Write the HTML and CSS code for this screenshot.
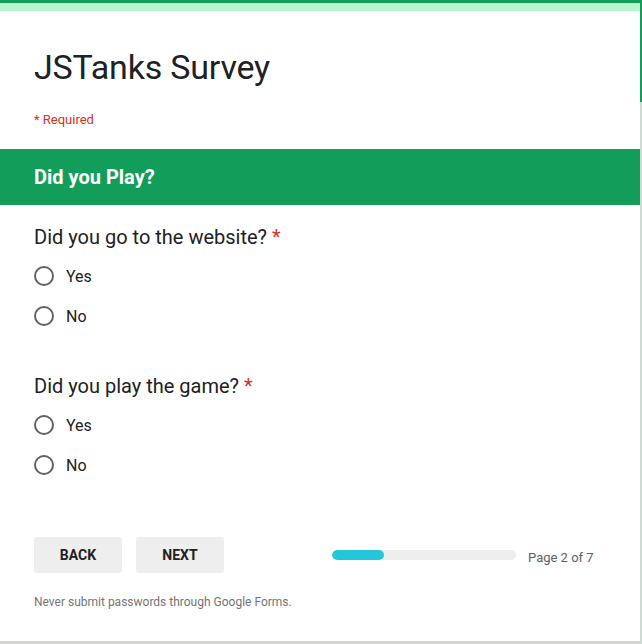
FILE: index.html
```html
<!DOCTYPE html>
<html lang="en">
<head>
<meta charset="utf-8">
<title>JSTanks Survey</title>
<link rel="stylesheet" href="styles.css">
</head>
<body>
<main class="card">
  <header class="form-head">
    <h1 class="form-title">JSTanks Survey</h1>
    <p class="required-note">* Required</p>
  </header>
  <h2 class="section-title">Did you Play?</h2>
  <section class="question">
    <div class="q-title">Did you go to the website? <span class="star">*</span></div>
    <label class="option"><span class="radio"></span><span class="opt-text">Yes</span></label>
    <label class="option"><span class="radio"></span><span class="opt-text">No</span></label>
  </section>
  <section class="question second">
    <div class="q-title">Did you play the game? <span class="star">*</span></div>
    <label class="option"><span class="radio"></span><span class="opt-text">Yes</span></label>
    <label class="option"><span class="radio"></span><span class="opt-text">No</span></label>
  </section>
  <div class="nav-row">
    <button class="btn">BACK</button>
    <button class="btn">NEXT</button>
    <div class="progress"><div class="progress-fill" style="width:28%"></div></div>
    <span class="page-count">Page 2 of 7</span>
  </div>
  <p class="footer-note">Never submit passwords through Google Forms.</p>
</main>
</body>
</html>
```
FILE: styles.css
```css
html, body {
  margin: 0;
  padding: 0;
}
body {
  width: 642px;
  height: 644px;
  overflow: hidden;
  background: linear-gradient(#129e5a 0, #129e5a 102px, #cfd9d4 102px);
  font-family: Roboto, "Noto Sans", sans-serif;
  color: #202124;
  padding-top: 3px;
  box-sizing: border-box;
}
.card {
  width: 640px;
  height: 638px;
  background: #fff;
  border-top: 8px solid #b7f6cb;
  box-sizing: border-box;
}
.form-head {
  padding: 36px 34px 0;
}
.form-title {
  margin: 0;
  font-size: 34px;
  line-height: 40px;
  font-weight: 400;
  letter-spacing: -0.2px;
  color: #202124;
}
.required-note {
  margin: 23px 0 0;
  font-size: 13px;
  line-height: 20px;
  color: #d93025;
}
.section-title {
  margin: 19px 0 0;
  height: 56px;
  line-height: 56px;
  background: #129e5a;
  color: #fff;
  font-size: 20px;
  font-weight: 700;
  padding-left: 34px;
}
.question {
  padding: 20px 34px 0;
}
.question.second {
  padding-top: 38px;
}
.q-title {
  font-size: 20px;
  line-height: 24px;
  margin-bottom: 7px;
}
.star {
  color: #d93025;
}
.option {
  display: flex;
  align-items: center;
  height: 40px;
  gap: 12px;
}
.radio {
  width: 20px;
  height: 20px;
  box-sizing: border-box;
  border: 2px solid #5f6368;
  border-radius: 50%;
}
.opt-text {
  font-size: 16px;
  color: #202124;
}
.nav-row {
  display: flex;
  align-items: center;
  padding: 52px 34px 0;
}
.btn {
  width: 88px;
  height: 36px;
  border: 0;
  border-radius: 3px;
  background: #eeeeee;
  color: #212121;
  font-family: Roboto, "Noto Sans", sans-serif;
  font-size: 14px;
  font-weight: 700;
  margin-right: 14px;
  padding: 0;
}
.progress {
  margin-left: 94px;
  width: 184px;
  height: 10px;
  border-radius: 5px;
  background: #eeeeee;
  overflow: hidden;
}
.progress-fill {
  height: 100%;
  background: #26c6da;
  border-radius: 5px;
}
.page-count {
  margin-left: 12px;
  font-size: 13px;
  color: #616161;
  position: relative;
  top: 2px;
}
.footer-note {
  margin: 21px 34px 0;
  font-size: 12px;
  line-height: 16px;
  color: #757575;
}
```
